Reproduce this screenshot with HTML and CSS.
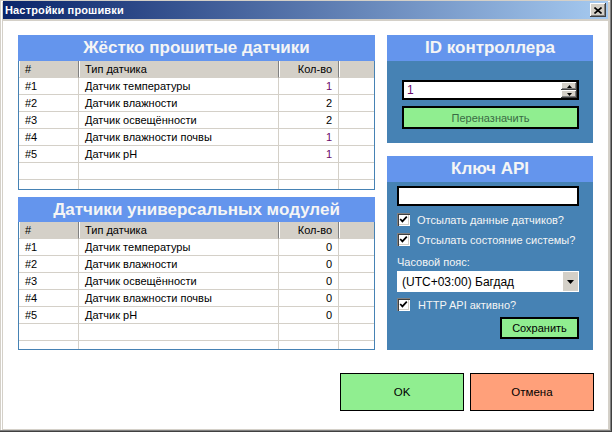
FILE: index.html
```html
<!DOCTYPE html>
<html lang="ru">
<head>
<meta charset="utf-8">
<title>Настройки прошивки</title>
<link rel="stylesheet" href="styles.css">
</head>
<body>
<div class="window">
  <div class="titlebar">
    <span class="title">Настройки прошивки</span>
    <span class="close"><svg width="8" height="7" viewBox="0 0 8 7"><path d="M0.5 0.5 L7.5 6.5 M7.5 0.5 L0.5 6.5" stroke="#000" stroke-width="1.6" fill="none"/></svg></span>
  </div>
  <div class="client">
    <div class="main">
      <div class="col-left">
        <section class="panel p1">
          <div class="panel-head">Жёстко прошитые датчики</div>
          <div class="grid">
            <div class="row head"><div class="cell">#</div><div class="cell">Тип датчика</div><div class="cell num">Кол-во</div><div class="cell"></div></div>
            <div class="row"><div class="cell">#1</div><div class="cell">Датчик температуры</div><div class="cell num one">1</div><div class="cell"></div></div>
            <div class="row"><div class="cell">#2</div><div class="cell">Датчик влажности</div><div class="cell num">2</div><div class="cell"></div></div>
            <div class="row"><div class="cell">#3</div><div class="cell">Датчик освещённости</div><div class="cell num">2</div><div class="cell"></div></div>
            <div class="row"><div class="cell">#4</div><div class="cell">Датчик влажности почвы</div><div class="cell num one">1</div><div class="cell"></div></div>
            <div class="row"><div class="cell">#5</div><div class="cell">Датчик pH</div><div class="cell num one">1</div><div class="cell"></div></div>
            <div class="row"><div class="cell"></div><div class="cell"></div><div class="cell"></div><div class="cell"></div></div>
            <div class="row"><div class="cell"></div><div class="cell"></div><div class="cell"></div><div class="cell"></div></div>
          </div>
        </section>
        <section class="panel p2">
          <div class="panel-head">Датчики универсальных модулей</div>
          <div class="grid">
            <div class="row head"><div class="cell">#</div><div class="cell">Тип датчика</div><div class="cell num">Кол-во</div><div class="cell"></div></div>
            <div class="row"><div class="cell">#1</div><div class="cell">Датчик температуры</div><div class="cell num">0</div><div class="cell"></div></div>
            <div class="row"><div class="cell">#2</div><div class="cell">Датчик влажности</div><div class="cell num">0</div><div class="cell"></div></div>
            <div class="row"><div class="cell">#3</div><div class="cell">Датчик освещённости</div><div class="cell num">0</div><div class="cell"></div></div>
            <div class="row"><div class="cell">#4</div><div class="cell">Датчик влажности почвы</div><div class="cell num">0</div><div class="cell"></div></div>
            <div class="row"><div class="cell">#5</div><div class="cell">Датчик pH</div><div class="cell num">0</div><div class="cell"></div></div>
            <div class="row"><div class="cell"></div><div class="cell"></div><div class="cell"></div><div class="cell"></div></div>
            <div class="row"><div class="cell"></div><div class="cell"></div><div class="cell"></div><div class="cell"></div></div>
          </div>
        </section>
      </div>
      <div class="col-right">
        <section class="box p3">
          <div class="panel-head">ID контроллера</div>
          <div class="box-body p3-body">
            <div class="updown">
              <span class="updown-value">1</span>
              <span class="spin">
                <span class="spin-btn"><svg width="5" height="3" viewBox="0 0 5 3"><path d="M2.5 0 L5 3 L0 3 Z" fill="#000"/></svg></span>
                <span class="spin-btn"><svg width="5" height="3" viewBox="0 0 5 3"><path d="M0 0 L5 0 L2.5 3 Z" fill="#000"/></svg></span>
              </span>
            </div>
            <div class="btn btn-reassign">Переназначить</div>
          </div>
        </section>
        <section class="box p4">
          <div class="panel-head">Ключ API</div>
          <div class="box-body p4-body">
            <div class="textbox"></div>
            <div class="check-row r1"><span class="check"><svg width="9" height="9" viewBox="0 0 9 9"><path d="M1.2 4 L3.4 6.4 L7.8 1.6" stroke="#000" stroke-width="1.7" fill="none"/></svg></span><span class="check-label">Отсылать данные датчиков?</span></div>
            <div class="check-row r2"><span class="check"><svg width="9" height="9" viewBox="0 0 9 9"><path d="M1.2 4 L3.4 6.4 L7.8 1.6" stroke="#000" stroke-width="1.7" fill="none"/></svg></span><span class="check-label">Отсылать состояние системы?</span></div>
            <div class="field-label">Часовой пояс:</div>
            <div class="combo"><span class="combo-value">(UTC+03:00) Багдад</span><span class="combo-btn"><svg width="7" height="4" viewBox="0 0 7 4"><path d="M0 0 L7 0 L3.5 4 Z" fill="#000"/></svg></span></div>
            <div class="check-row r3"><span class="check"><svg width="9" height="9" viewBox="0 0 9 9"><path d="M1.2 4 L3.4 6.4 L7.8 1.6" stroke="#000" stroke-width="1.7" fill="none"/></svg></span><span class="check-label wide">HTTP API активно?</span></div>
            <div class="btn btn-save">Сохранить</div>
          </div>
        </section>
      </div>
    </div>
    <div class="actions">
      <div class="btn btn-ok">OK</div>
      <div class="btn btn-cancel">Отмена</div>
    </div>
  </div>
</div>
</body>
</html>
```

FILE: styles.css
```css
* { box-sizing: border-box; }
html, body { margin: 0; padding: 0; }
body {
  width: 612px;
  height: 432px;
  overflow: hidden;
  font-family: "Liberation Sans", Arial, sans-serif;
  font-size: 11px;
  color: #000;
  background: #d4d0c8;
}
.window {
  width: 612px;
  height: 432px;
  background: #d4d0c8;
  padding: 1px 4px 3px 3px;
  display: flex;
  flex-direction: column;
  box-shadow: inset -1px -1px #404040, inset -2px -2px #808080, inset 1px 1px #d4d0c8, inset 2px 2px #fff;
}
.titlebar {
  flex: none;
  height: 18px;
  margin-bottom: 2px;
  background: linear-gradient(to right, #0a246a, #a6caf0);
  display: flex;
  align-items: center;
  padding: 0 2px 0 2px;
}
.title {
  flex: 1;
  color: #fff;
  font-weight: bold;
  font-size: 11px;
  letter-spacing: 0.15px;
}
.close {
  width: 16px;
  height: 14px;
  background: #d4d0c8;
  box-shadow: inset -1px -1px #404040, inset 1px 1px #fff, inset -2px -2px #808080;
  display: flex;
  align-items: center;
  justify-content: center;
}
.client {
  flex: 1;
  background: #fff;
  padding: 14px 15px 0 15px;
  display: flex;
  flex-direction: column;
}
.main {
  display: flex;
  gap: 12px;
  height: 315px;
}
.col-left {
  width: 357px;
  display: flex;
  flex-direction: column;
  gap: 7px;
}
.col-right {
  width: 206px;
  display: flex;
  flex-direction: column;
  gap: 13px;
}
.panel { display: flex; flex-direction: column; }
.p1 { height: 155px; }
.p2 { height: 153px; }
.panel-head {
  flex: none;
  background: #6495ed;
  color: #f5f5f5;
  font-weight: bold;
  font-size: 17px;
  text-align: center;
  height: 26px;
  line-height: 26px;
  white-space: nowrap;
}
.p2 .panel-head { height: 25px; line-height: 25px; }
.grid {
  flex: 1;
  border: 1px solid #4682b4;
  border-top: none;
  overflow: hidden;
  background: #fff;
}
.row {
  display: grid;
  grid-template-columns: 60px 200px 60px 35px;
  height: 17px;
}
.cell {
  border-right: 1px solid #d4d0c8;
  border-bottom: 1px solid #d4d0c8;
  padding: 0 6px;
  line-height: 16px;
  white-space: nowrap;
  overflow: hidden;
}
.cell:last-child { border-right: none; }
.num { text-align: right; }
.one { color: #6a0a6a; }
.row.head .cell {
  background: #d4d0c8;
  border-right-color: #808080;
  border-bottom-color: #d4d0c8;
  box-shadow: inset 1px 0 #fff;
}
.box {
  background: #4682b4;
  display: flex;
  flex-direction: column;
}
.p3 { height: 108px; }
.p4 { flex: 1; }
.box-body { display: flex; flex-direction: column; }
.p3-body { padding: 19px 14px 0 15px; gap: 6px; }
.updown {
  height: 20px;
  background: #fff;
  border: 2px solid #000;
  display: flex;
  align-items: center;
}
.updown-value {
  flex: 1;
  padding-left: 3px;
  font-size: 12px;
  color: #6a0a6a;
}
.spin {
  width: 16px;
  height: 16px;
  display: flex;
  flex-direction: column;
}
.spin-btn {
  flex: 1;
  background: #d4d0c8;
  box-shadow: inset -1px -1px #404040, inset 1px 1px #fff, inset -2px -2px #808080;
  display: flex;
  align-items: center;
  justify-content: center;
}
.btn {
  display: flex;
  align-items: center;
  justify-content: center;
  font-size: 11px;
  border: 1px solid #000;
  white-space: nowrap;
}
.btn-reassign {
  height: 23px;
  background: #90ee90;
  border-width: 2px;
  color: #3a6b45;
}
.p4-body { padding: 4px 14px 0 10px; }
.textbox {
  height: 20px;
  background: #fff;
  border: 2px solid #000;
}
.check-row {
  display: flex;
  align-items: center;
  gap: 7px;
  height: 13px;
  margin-top: 7px;
}
.r3 { margin-top: 6px; }
.check {
  width: 13px;
  height: 13px;
  flex: none;
  background: #fff;
  box-shadow: inset 1px 1px #808080, inset 2px 2px #404040, inset -1px -1px #fff, inset -2px -2px #d4d0c8;
  display: flex;
  align-items: center;
  justify-content: center;
}
.check-label {
  color: #f5f5f5;
  font-size: 11px;
  white-space: nowrap;
}
.check-label.wide { margin-left: 1px; }
.field-label {
  color: #f5f5f5;
  font-size: 11px;
  height: 14px;
  line-height: 14px;
  margin-top: 9px;
}
.combo {
  margin-top: 2px;
  height: 21px;
  background: #fff;
  display: flex;
  align-items: center;
  padding: 1px 1px 1px 5px;
}
.combo-value { flex: 1; font-size: 12px; }
.combo-btn {
  width: 15px;
  height: 19px;
  background: #d4d0c8;
  display: flex;
  align-items: center;
  justify-content: center;
}
.btn-save {
  align-self: flex-end;
  margin-top: 6px;
  width: 79px;
  height: 22px;
  background: #90ee90;
  border-width: 2px;
}
.actions {
  display: flex;
  justify-content: flex-end;
  gap: 6px;
  margin-top: 23px;
  margin-right: -1px;
}
.btn-ok, .btn-cancel {
  width: 124px;
  height: 38px;
  font-size: 11.5px;
}
.btn-ok { background: #90ee90; }
.btn-cancel { background: #ffa07a; }
```
